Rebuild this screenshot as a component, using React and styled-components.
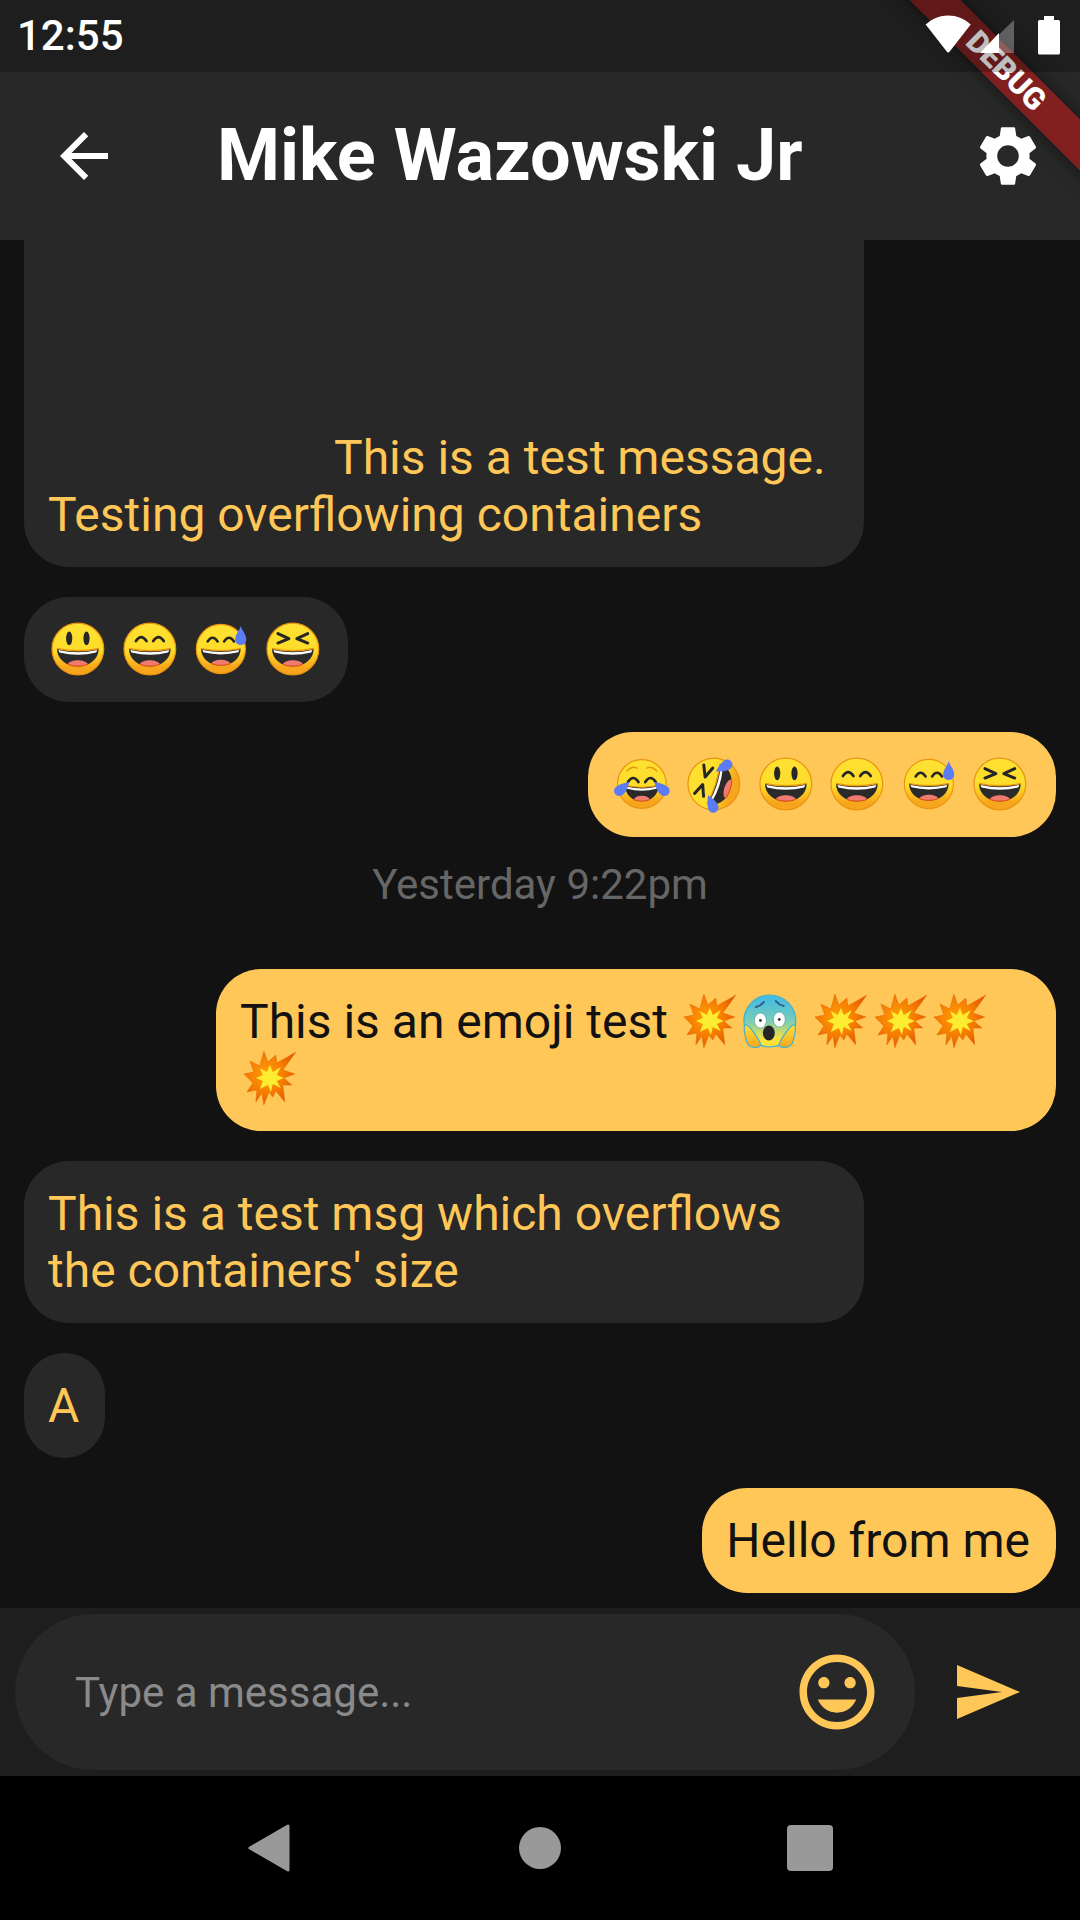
import React from "react";
import styled, { createGlobalStyle } from "styled-components";

const GlobalStyle = createGlobalStyle`
  html, body {
    margin: 0;
    padding: 0;
    background: #000;
  }
  * {
    box-sizing: border-box;
  }
`;

const Screen = styled.div`
  position: relative;
  width: 1080px;
  height: 1920px;
  overflow: hidden;
  display: flex;
  flex-direction: column;
  background: #121212;
  font-family: Roboto, "Liberation Sans", sans-serif;
`;

const Header = styled.header`
  flex: none;
  background: #282828;
`;

const StatusBar = styled.div`
  position: relative;
  z-index: 2;
  height: 72px;
  display: flex;
  align-items: center;
  justify-content: space-between;
  padding: 0 20px 0 17px;
  background: rgba(0, 0, 0, 0.25);
`;

const Clock = styled.span`
  color: #fff;
  font-size: 42px;
  font-weight: 500;
  line-height: 72px;
`;

const StatusIcons = styled.svg`
  display: block;
  width: 140px;
  height: 72px;
`;

const AppBar = styled.div`
  height: 168px;
  display: flex;
  align-items: center;
`;

const IconSlot = styled.div`
  flex: none;
  width: ${(p) => p.$w}px;
  display: flex;
  justify-content: center;
  align-items: center;
`;

const Title = styled.h1`
  flex: 1;
  margin: 0 0 0 49px;
  color: #fff;
  font-size: 72px;
  font-weight: 700;
  line-height: 84px;
  white-space: nowrap;
`;

const Ribbon = styled.div`
  position: absolute;
  z-index: 1;
  left: 856px;
  top: 52.5px;
  width: 300px;
  height: 36px;
  transform: rotate(45deg);
  background: rgba(183, 28, 28, 0.63);
  box-shadow: 0 0 18px rgba(0, 0, 0, 0.5);
  color: #fff;
  font-size: 30.6px;
  font-weight: 900;
  line-height: 36px;
  text-align: center;
`;

const Messages = styled.main`
  flex: 1;
  min-height: 0;
  overflow: hidden;
  display: flex;
  flex-direction: column;
  justify-content: flex-end;
  gap: 30px;
  padding: 0 24px 15px;
`;

const Bubble = styled.div`
  flex: none;
  align-self: ${(p) => (p.$me ? "flex-end" : "flex-start")};
  max-width: 840px;
  padding: ${(p) => p.$top || 24}px 26px 24px 24px;
  border-radius: 45px;
  background: ${(p) => (p.$me ? "#ffc757" : "#282828")};
  color: ${(p) => (p.$me ? "#121212" : "#ffc757")};
  font-size: 48px;
  line-height: 57px;
  text-indent: ${(p) => p.$indent || 0}px;
`;

const Stamp = styled.div`
  flex: none;
  margin: -7px 0 30px;
  color: #666;
  font-size: 42px;
  line-height: 49px;
  text-align: center;
`;

const InputBar = styled.div`
  flex: none;
  height: 168px;
  display: flex;
  align-items: center;
  padding-left: 15px;
  background: #1e1e1e;
`;

const InputPill = styled.div`
  width: 900px;
  height: 156px;
  display: flex;
  align-items: center;
  justify-content: space-between;
  padding: 0 33px 0 60px;
  border-radius: 78px;
  background: #282828;
`;

const Placeholder = styled.span`
  color: #8a8a8a;
  font-size: 42px;
  line-height: 49px;
`;

const NavBar = styled.nav`
  flex: none;
  height: 144px;
  display: grid;
  grid-template-columns: 273px 270px 270px;
  justify-content: center;
  justify-items: center;
  align-items: center;
  padding-right: 3px;
  background: #000;
`;

const NavCircle = styled.div`
  width: 42px;
  height: 42px;
  border-radius: 50%;
  background: #999;
`;

const NavSquare = styled.div`
  width: 46px;
  height: 46px;
  border-radius: 4px;
  background: #999;
`;

const Glyph = styled.svg`
  display: block;
  flex: none;
  fill: ${(p) => p.$color};
`;

const EmojiSvg = styled.svg`
  display: inline-block;
  width: 59.7px;
  height: 56px;
  vertical-align: top;
  overflow: visible;
`;

const DefsHolder = styled.svg`
  position: absolute;
  width: 0;
  height: 0;
`;

function Icon({ d, size, color }) {
  return (
    <Glyph viewBox="0 0 24 24" width={size} height={size} $color={color}>
      <path d={d} />
    </Glyph>
  );
}

const BACK = "M20 11H7.83l5.59-5.59L12 4l-8 8 8 8 1.41-1.41L7.83 13H20v-2z";
const GEAR =
  "M19.14 12.94c.04-.3.06-.61.06-.94 0-.32-.02-.64-.07-.94l2.03-1.58c.18-.14.23-.41.12-.61l-1.92-3.32c-.12-.22-.37-.29-.59-.22l-2.39.96c-.5-.38-1.03-.7-1.62-.94l-.36-2.54c-.04-.24-.24-.41-.48-.41h-3.84c-.24 0-.43.17-.47.41l-.36 2.54c-.59.24-1.13.57-1.62.94l-2.39-.96c-.22-.08-.47 0-.59.22L2.74 8.87c-.12.21-.08.47.12.61l2.03 1.58c-.05.3-.09.63-.09.94s.02.64.07.94l-2.03 1.58c-.18.14-.23.41-.12.61l1.92 3.32c.12.22.37.29.59.22l2.39-.96c.5.38 1.03.7 1.62.94l.36 2.54c.05.24.24.41.48.41h3.84c.24 0 .44-.17.47-.41l.36-2.54c.59-.24 1.13-.56 1.62-.94l2.39.96c.22.08.47 0 .59-.22l1.92-3.32c.12-.22.07-.47-.12-.61l-2.01-1.58zM12 15.6c-1.98 0-3.6-1.62-3.6-3.6s1.62-3.6 3.6-3.6 3.6 1.62 3.6 3.6-1.62 3.6-3.6 3.6z";
const SMILE =
  "M11.99 2C6.47 2 2 6.48 2 12s4.47 10 9.99 10C17.52 22 22 17.52 22 12S17.52 2 11.99 2zM12 20c-4.42 0-8-3.58-8-8s3.58-8 8-8 8 3.58 8 8-3.58 8-8 8zm3.5-9c.83 0 1.5-.67 1.5-1.5S16.33 8 15.5 8 14 8.67 14 9.5s.67 1.5 1.5 1.5zm-7 0c.83 0 1.5-.67 1.5-1.5S9.33 8 8.5 8 7 8.67 7 9.5 7.67 11 8.5 11zm3.5 6.5c2.33 0 4.31-1.46 5.11-3.5H6.89c.8 2.04 2.78 3.5 5.11 3.5z";
const SEND = "M2.01 21L23 12 2.01 3 2 10l15 2-15 2z";

function EmojiDefs() {
  return (
    <DefsHolder aria-hidden="true">
      <defs>
        <linearGradient id="faceFill" x1="0" y1="0" x2="0" y2="1">
          <stop offset="0" stopColor="#fee133" />
          <stop offset="0.52" stopColor="#fedd2a" />
          <stop offset="0.88" stopColor="#f6a51c" />
        </linearGradient>
        <radialGradient id="burstFill" cx="0.42" cy="0.42" r="0.6">
          <stop offset="0" stopColor="#ff9d0a" />
          <stop offset="0.6" stopColor="#f57c00" />
          <stop offset="1" stopColor="#e35a00" />
        </radialGradient>
        <linearGradient id="fearFill" x1="0" y1="0" x2="0" y2="1">
          <stop offset="0.1" stopColor="#49bde0" />
          <stop offset="0.5" stopColor="#79cdb6" />
          <stop offset="0.85" stopColor="#fde23a" />
        </linearGradient>
        <linearGradient id="handFill" x1="0" y1="0" x2="0" y2="1">
          <stop offset="0" stopColor="#fde23a" />
          <stop offset="1" stopColor="#f8a51c" />
        </linearGradient>
      </defs>
    </DefsHolder>
  );
}

function Head({ r = 26 }) {
  return <circle cx="30" cy="28" r={r} fill="url(#faceFill)" stroke="#ea9410" strokeWidth="1.2" />;
}

// wide open laughing mouth, shared by most of the faces
function Mouth() {
  return (
    <g>
      <path d="M9 27.5Q30 32 51 27.5C51 38 42 45.5 30 45.5C18 45.5 9 38 9 27.5Z" fill="#2a2a2a" />
      <path d="M10.5 29Q30 33.5 49.5 29L48.5 31.5Q30 36 11.5 31.5Z" fill="#fff" />
      <path d="M20 43C23 38 37 38 40 43C36 46 24 46 20 43Z" fill="#ef7b70" />
      <path d="M20 43.4C24 45.8 36 45.8 40 43.4" fill="none" stroke="#e2561d" strokeWidth="1.2" />
      <path d="M9 27.5Q30 32 51 27.5" fill="none" stroke="#ee9a0f" strokeWidth="1.3" />
    </g>
  );
}

function ArcEyes({ y = 20 }) {
  return (
    <g fill="none" stroke="#262626" strokeWidth="2.7" strokeLinecap="round">
      <path d={`M16 ${y}Q21.3 ${y - 8} 26.6 ${y}`} />
      <path d={`M33.4 ${y}Q38.7 ${y - 8} 44 ${y}`} />
    </g>
  );
}

function SquintEyes() {
  return (
    <g fill="none" stroke="#262626" strokeWidth="3" strokeLinecap="round" strokeLinejoin="round">
      <path d="M15 12.5L26 17.5L15 22" />
      <path d="M45 12.5L34 17.5L45 22" />
    </g>
  );
}

function Tears() {
  const d = "M17.5 26C12 27 4.5 29 2.6 32.5C0.8 36 3.5 40.5 8 40C12.5 39.5 15.5 33 17.5 26Z";
  return (
    <g fill="#5b7cf5">
      <path d={d} />
      <path d={d} transform="matrix(-1 0 0 1 60 0)" />
    </g>
  );
}

function Grinning() {
  return (
    <EmojiSvg viewBox="0 0 60 56">
      <Head />
      <ellipse cx="21.3" cy="17.3" rx="3.1" ry="7" fill="#262626" />
      <ellipse cx="38.7" cy="17.3" rx="3.1" ry="7" fill="#262626" />
      <Mouth />
    </EmojiSvg>
  );
}

function Beaming() {
  return (
    <EmojiSvg viewBox="0 0 60 56">
      <Head />
      <ArcEyes />
      <Mouth />
    </EmojiSvg>
  );
}

function Sweat() {
  return (
    <EmojiSvg viewBox="0 0 60 56">
      <g transform="translate(1.5 1.4) scale(0.95)">
        <Head />
        <ArcEyes />
        <Mouth />
      </g>
      <path d="M50 5C51.5 10 55.6 13.5 55.6 18.4A5.6 5.6 0 0 1 44.4 18.4C44.4 13.5 48.5 10 50 5Z" fill="#5b7cf5" />
    </EmojiSvg>
  );
}

function Squint() {
  return (
    <EmojiSvg viewBox="0 0 60 56">
      <Head />
      <SquintEyes />
      <Mouth />
    </EmojiSvg>
  );
}

function Joy() {
  return (
    <EmojiSvg viewBox="0 0 60 56">
      <Head r={24.5} />
      <g fill="none" stroke="#ea9410" strokeWidth="1.4" strokeLinecap="round">
        <path d="M15 15Q20 9.5 25 12" />
        <path d="M45 15Q40 9.5 35 12" />
      </g>
      <ArcEyes y={26} />
      <g transform="translate(6 4.5) scale(0.8 0.9)">
        <Mouth />
      </g>
      <Tears />
    </EmojiSvg>
  );
}

function Rofl() {
  return (
    <EmojiSvg viewBox="0 0 60 56">
      <g transform="rotate(-72 30 28)">
        <Head />
        <SquintEyes />
        <Mouth />
        <Tears />
      </g>
    </EmojiSvg>
  );
}

function Collision() {
  return (
    <EmojiSvg viewBox="0 0 60 56">
      <polygon
        points="24,1 28,12 36,5 37,13 56,2 43,20 55,24 44,28 52,35 43,35 45,52 36,41 33,47 29,42 24,55 22,43 16,52 17,40 7,42 13,33 4,24 14,22 10,11 20,16"
        fill="url(#burstFill)"
        stroke="#e8690a"
        strokeWidth="0.6"
      />
      <polygon
        points="30,15 33,22 41,17 37,25 44,28 37,31 41,38 33,34 31,42 28,35 20,39 23,31 16,28 23,25 20,18 27,22"
        fill="#fdec2f"
      />
    </EmojiSvg>
  );
}

function Fear() {
  const hand = "M4.5 33C5.5 30.5 9 33 11.5 36.5C15 41 19 47 20.5 50.5C21 53.5 18 55 14 54.5C10 54 7.5 52 6.5 48C5.5 44 3.5 37 4.5 33Z";
  return (
    <EmojiSvg viewBox="0 0 60 56">
      <circle cx="30" cy="28" r="26" fill="url(#fearFill)" stroke="#48b4cc" strokeWidth="1.4" />
      <g fill="none" stroke="#2f5f86" strokeWidth="2" strokeLinecap="round">
        <path d="M16 14Q20.5 13 24 9" />
        <path d="M44 13Q39.5 12 36 8" />
      </g>
      <ellipse cx="20.5" cy="27.5" rx="6" ry="7.5" fill="#fff" stroke="#3f7f9a" strokeWidth="0.5" />
      <ellipse cx="39.5" cy="26.5" rx="6" ry="7.5" fill="#fff" stroke="#3f7f9a" strokeWidth="0.5" />
      <circle cx="20.5" cy="27.5" r="1.4" fill="#333" />
      <circle cx="39.5" cy="26.5" r="1.4" fill="#333" />
      <ellipse cx="29" cy="40" rx="6" ry="7.5" fill="#262626" />
      <path d={hand} fill="url(#handFill)" stroke="#48b4cc" strokeWidth="1.3" />
      <path d={hand} fill="url(#handFill)" stroke="#48b4cc" strokeWidth="1.3" transform="matrix(-1 0 0 1 60 0)" />
    </EmojiSvg>
  );
}

export default function App() {
  return (
    <Screen>
      <GlobalStyle />
      <EmojiDefs />
      <Header>
        <StatusBar>
          <Clock>12:55</Clock>
          <StatusIcons viewBox="0 0 140 72">
            <path d="M6 24.5C19 12.5 38 12.5 51 24.5L30 51.5Q28.5 53.3 27 51.5Z" transform="translate(-0.3 0)" fill="#fff" />
            <path d="M60 53L94 20V53Z" fill="#fff" fillOpacity="0.3" />
            <path d="M60 53L79 33V53Z" fill="#fff" />
            <path d="M118 21.5Q118 20 119.5 20H124V16H134V20H138.5Q140 20 140 21.5V53Q140 54.6 138.5 54.6H119.5Q118 54.6 118 53Z" fill="#fff" />
          </StatusIcons>
        </StatusBar>
        <AppBar>
          <IconSlot $w={168}>
            <Icon d={BACK} size={72} color="#fff" />
          </IconSlot>
          <Title>Mike Wazowski Jr</Title>
          <IconSlot $w={144}>
            <Icon d={GEAR} size={72} color="#fff" />
          </IconSlot>
        </AppBar>
      </Header>
      <Ribbon>DEBUG</Ribbon>
      <Messages>
        <Bubble $top={400} $indent={286}>
          This is a test message. Testing overflowing containers
        </Bubble>
        <Bubble>
          <Grinning /> <Beaming /> <Sweat /> <Squint />
        </Bubble>
        <Bubble $me>
          <Joy /> <Rofl /> <Grinning /> <Beaming /> <Sweat /> <Squint />
        </Bubble>
        <Stamp>Yesterday 9:22pm</Stamp>
        <Bubble $me>
          This is an emoji test <Collision />
          <Fear /> <Collision />
          <Collision />
          <Collision /> <Collision />
        </Bubble>
        <Bubble>This is a test msg which overflows the containers' size</Bubble>
        <Bubble>A</Bubble>
        <Bubble $me>Hello from me</Bubble>
      </Messages>
      <InputBar>
        <InputPill>
          <Placeholder>Type a message...</Placeholder>
          <Icon d={SMILE} size={90} color="#ffc757" />
        </InputPill>
        <IconSlot $w={144}>
          <Icon d={SEND} size={72} color="#ffc757" />
        </IconSlot>
      </InputBar>
      <NavBar>
        <svg width="44" height="50" viewBox="0 0 44 50">
          <path d="M41 3V47L3 25Z" fill="#999" stroke="#999" strokeWidth="3" strokeLinejoin="round" />
        </svg>
        <NavCircle />
        <NavSquare />
      </NavBar>
    </Screen>
  );
}
